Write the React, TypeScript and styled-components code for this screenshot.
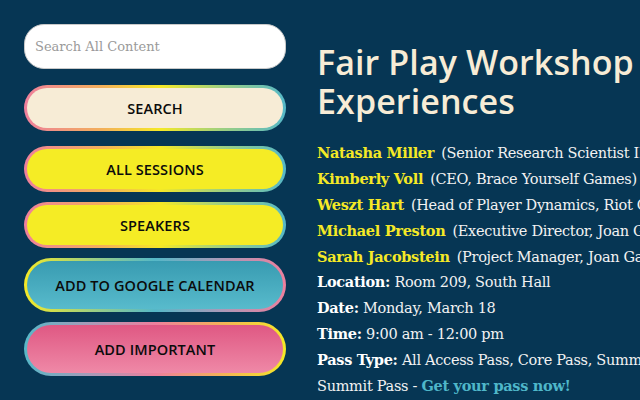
import React from "react";
import styled, { createGlobalStyle, css } from "styled-components";

const Global = createGlobalStyle`
  html, body {
    margin: 0;
    padding: 0;
    background: #063654;
    overflow: hidden;
  }
  body {
    width: 640px;
    height: 400px;
  }
`;

const Page = styled.div`
  display: flex;
  gap: 31px;
  padding: 24px 0 0 24px;
  width: 1000px;
  height: 400px;
  box-sizing: border-box;
`;

const Sidebar = styled.aside`
  width: 262px;
  flex: none;
  display: flex;
  flex-direction: column;
`;

const SearchInput = styled.input`
  box-sizing: border-box;
  width: 100%;
  height: 45px;
  border: 1px solid #c9c9c9;
  border-radius: 20px;
  background: #fff;
  padding: 0 10px;
  font-family: "DejaVu Serif", serif;
  font-size: 13px;
  color: #333;
  outline: none;
  margin-bottom: 16px;
  &::placeholder {
    color: #9a9a9a;
  }
`;

type Variant = "cream" | "yellow" | "teal" | "pink";

const fills: Record<Variant, string> = {
  cream: "linear-gradient(#f7ecd6, #f7ecd6)",
  yellow: "linear-gradient(#f5ec25, #f5ec25)",
  teal: "linear-gradient(180deg, #389bb1, #58bbcc)",
  pink: "linear-gradient(180deg, #df5883, #ef89a7)",
};

const rims: Record<Variant, string> = {
  cream: "linear-gradient(90deg, #ee7f9d 0%, #f3b05a 30%, #f5e926 52%, #9fd07f 75%, #55b8c8 100%)",
  yellow: "linear-gradient(90deg, #ee7f9d 0%, #f3b05a 30%, #f5e926 52%, #9fd07f 75%, #55b8c8 100%)",
  teal: "linear-gradient(90deg, #f5e926 0%, #9fd07f 25%, #55b8c8 50%, #a89ab8 75%, #ee7f9d 100%)",
  pink: "linear-gradient(90deg, #55b8c8 0%, #a89ab8 25%, #ee7f9d 50%, #f3b05a 75%, #f5e926 100%)",
};

const NavButton = styled.button<{ $variant: Variant; $tall?: boolean; $gap: number }>`
  box-sizing: border-box;
  width: 100%;
  height: ${(p) => (p.$tall ? 54 : 46)}px;
  margin-bottom: ${(p) => p.$gap}px;
  border: 3px solid transparent;
  border-radius: 30px;
  ${(p) => css`
    background: ${fills[p.$variant]} padding-box, ${rims[p.$variant]} border-box;
  `}
  font-family: "Open Sans", sans-serif;
  font-weight: 600;
  font-size: 14.5px;
  letter-spacing: 0.1px;
  color: #0b0b0b;
  text-transform: uppercase;
  display: flex;
  align-items: center;
  justify-content: center;
  padding: 0;
`;

const Main = styled.main`
  width: 420px;
  flex: none;
`;

const Title = styled.h1`
  margin: 19px 0 0;
  font-family: "Open Sans", sans-serif;
  font-weight: 600;
  font-size: 34px;
  line-height: 39px;
  letter-spacing: 0.1px;
  color: #f7ecd6;
  white-space: nowrap;
`;

const Details = styled.div`
  margin-top: 19px;
  font-family: "DejaVu Serif", serif;
  font-size: 14.5px;
  color: #f2f2f2;
  white-space: nowrap;
  letter-spacing: -0.3px;
`;

const Line = styled.div`
  height: 25.9px;
  line-height: 25.9px;
`;

const Name = styled.span`
  font-weight: 700;
  color: #f5e926;
  margin-right: 7px;
`;

const Label = styled.span`
  font-weight: 700;
  color: #fff;
`;

const PassLink = styled.a`
  font-weight: 700;
  color: #4fb7c9;
  text-decoration: none;
`;

const speakers = [
  ["Natasha Miller", "(Senior Research Scientist II, Microsoft Research)"],
  ["Kimberly Voll", "(CEO, Brace Yourself Games)"],
  ["Weszt Hart", "(Head of Player Dynamics, Riot Games)"],
  ["Michael Preston", "(Executive Director, Joan Ganz Cooney Center)"],
  ["Sarah Jacobstein", "(Project Manager, Joan Ganz Cooney Center)"],
];

export default function App() {
  return (
    <>
      <Global />
      <Page>
        <Sidebar>
          <SearchInput placeholder="Search All Content" />
          <NavButton $variant="cream" $gap={15}>Search</NavButton>
          <NavButton $variant="yellow" $gap={10}>All Sessions</NavButton>
          <NavButton $variant="yellow" $gap={10}>Speakers</NavButton>
          <NavButton $variant="teal" $tall $gap={10}>Add to Google Calendar</NavButton>
          <NavButton $variant="pink" $tall $gap={0}>Add Important</NavButton>
        </Sidebar>
        <Main>
          <Title>
            Fair Play Workshop
            <br />
            Experiences
          </Title>
          <Details>
            {speakers.map(([n, r]) => (
              <Line key={n}>
                <Name>{n}</Name>
                {r}
              </Line>
            ))}
            <Line>
              <Label>Location:</Label> Room 209, South Hall
            </Line>
            <Line>
              <Label>Date:</Label> Monday, March 18
            </Line>
            <Line>
              <Label>Time:</Label> 9:00 am - 12:00 pm
            </Line>
            <Line>
              <Label>Pass Type:</Label> All Access Pass, Core Pass, Summits Pass, Indie Games
            </Line>
            <Line>
              Summit Pass - <PassLink href="#">Get your pass now!</PassLink>
            </Line>
          </Details>
        </Main>
      </Page>
    </>
  );
}
